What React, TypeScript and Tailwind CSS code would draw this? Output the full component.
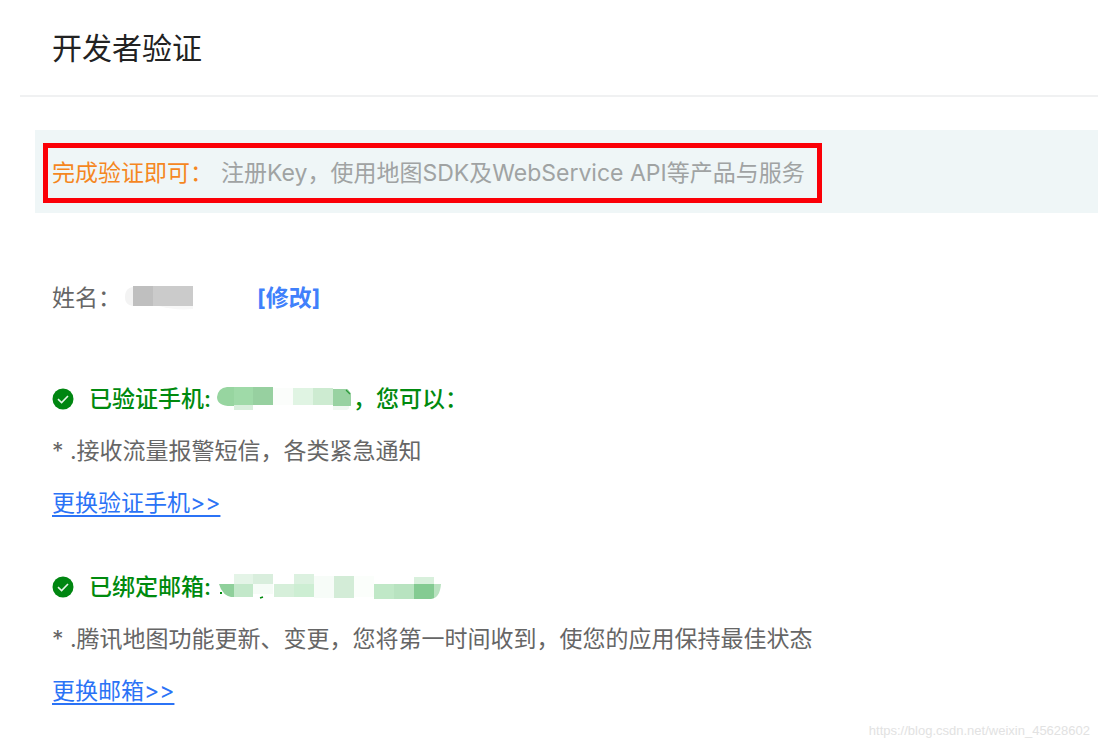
import type { ReactNode } from 'react'
import { clsx } from 'clsx'

type Block = [x: number, y: number, width: number, height: number, fill: string]

// redacted values are drawn as a strip of flat blocks
const nameBlocks: Block[] = [
    [8, 1, 20, 20, '#bfbfbf'],
    [28, 1, 40, 20, '#cbcbcb'],
]

const phoneBlocks: Block[] = [
    [0, 0, 20, 20, '#97d5a0'],
    [17, 0, 20, 18, '#9fdaa8'],
    [36, 0, 20, 18, '#97d0a0'],
    [17, 18, 19, 5, '#d8efdc'],
    [56, 0, 20, 18, '#fbfdfb'],
    [76, 1, 20, 17, '#e0f4e3'],
    [96, 1, 20, 17, '#cdebd1'],
    [116, 2, 18, 17, '#98d2a1'],
    [116, 19, 16, 4, '#f0f8f1'],
]

const mailBlocks: Block[] = [
    [0, 10, 15, 13, '#8fd09b'],
    [15, 0, 20, 10, '#e4f4e7'],
    [15, 10, 19, 13, '#c3e8ca'],
    [34, 0, 20, 10, '#d9eedd'],
    [34, 10, 20, 10, '#f6fcf7'],
    [55, 10, 20, 13, '#d6efda'],
    [75, 0, 20, 10, '#dcf1e0'],
    [75, 10, 20, 13, '#cdeed3'],
    [95, 2, 20, 22, '#f7fcf8'],
    [115, 2, 20, 22, '#d3ecd7'],
    [135, 2, 20, 21, '#fbfefb'],
    [155, 10, 20, 15, '#c0e8c7'],
    [175, 10, 20, 15, '#b8e3c0'],
    [195, 3, 20, 7, '#d8f0dc'],
    [195, 10, 20, 15, '#84cb92'],
    [215, 10, 7, 15, '#b9e2c0'],
]

function NameMask() {
    return (
        <svg width="70" height="26" viewBox="0 0 70 26" aria-hidden="true">
            <path d="M8 2C2 3 0 7 0 12s2 8 8 9z" fill="#f3f3f3" />
            <path d="M34 21h34v3c-12 1-24 0-34-3z" fill="#f7f7f7" />
            {nameBlocks.map(([x, y, width, height, fill]) => (
                <rect key={`${x}-${y}`} x={x} y={y} width={width} height={height} fill={fill} />
            ))}
        </svg>
    )
}

function PhoneMask() {
    return (
        <svg width="136" height="24" viewBox="0 0 136 24" aria-hidden="true">
            <clipPath id="phone-mask">
                <path d="M10 0h46v1h73q6 4 6 11 0 12-10 12H17v-5Q0 20 0 10 1 1 10 0z" />
            </clipPath>
            <g clipPath="url(#phone-mask)">
                {phoneBlocks.map(([x, y, width, height, fill]) => (
                    <rect key={`${x}-${y}`} x={x} y={y} width={width} height={height} fill={fill} />
                ))}
            </g>
            <path d="M129 3l4 4" stroke="#2c9a3a" strokeWidth="1.2" />
        </svg>
    )
}

function MailMask() {
    return (
        <svg width="222" height="26" viewBox="0 0 222 26" aria-hidden="true">
            <clipPath id="mail-mask">
                <path d="M0 10h15V0h190l10 3v7h7q-1 14-10 15H155v-1H15Q3 22 0 10z" />
            </clipPath>
            <g clipPath="url(#mail-mask)">
                {mailBlocks.map(([x, y, width, height, fill]) => (
                    <rect key={`${x}-${y}`} x={x} y={y} width={width} height={height} fill={fill} />
                ))}
            </g>
            <rect x="1" y="18" width="2" height="2" fill="#008a0e" />
            <path d="M41 24l3-1" stroke="#008a0e" strokeWidth="1.5" />
        </svg>
    )
}

function CheckBadge() {
    return (
        <svg width="22" height="22" viewBox="0 0 22 22" className="mr-[15px] shrink-0" aria-hidden="true">
            <circle cx="11" cy="11" r="10.5" fill="#008611" />
            <path d="M6 11.2l3.6 3.4L16 8" fill="none" stroke="#e6f5e8" strokeWidth="1.6" />
        </svg>
    )
}

function Row({ className, children }: { className?: string; children: ReactNode }) {
    return <div className={clsx('flex min-h-[52px] items-center', className)}>{children}</div>
}

function ChangeLink({ children }: { children: ReactNode }) {
    return (
        <a href="#" className="text-[#2b73f6] underline decoration-2 underline-offset-4">
            {children}
        </a>
    )
}

export default function App() {
    return (
        <main className="bg-white pl-5 font-['Inter','Noto_Sans_CJK_SC',sans-serif] text-[23px] leading-8 text-[#666]">
            <header className="border-b-2 border-[#f0f1f2] px-8 pt-[26px] pb-[24px]">
                <h1 className="text-[30px] leading-[45px] text-[#222]">开发者验证</h1>
            </header>

            <div className="mt-[33px] ml-[15px] bg-[#eff6f7] pt-[13px] pb-[10px] pl-2">
                <p className="w-fit border-5 border-[#fb0007] py-[9px] pr-3 pl-1 text-[#a0a3a3]">
                    <span className="mr-2 text-[#f5871f]">完成验证即可：</span>
                    注册Key，使用地图SDK及WebService API等产品与服务
                </p>
            </div>

            <div className="px-8 pt-[59px]">
                <Row>
                    <span>姓名：</span>
                    <span className="ml-1 mr-[62px]"><NameMask /></span>
                    <button type="button" className="font-bold text-[#4080fb]">[修改]</button>
                </Row>

                <section className="mt-[49px]">
                    <Row className="font-medium text-[#008a0e]">
                        <CheckBadge />
                        <span>已验证手机:</span>
                        <span className="ml-1.5"><PhoneMask /></span>
                        <span>，您可以：</span>
                    </Row>
                    <Row>* .接收流量报警短信，各类紧急通知</Row>
                    <Row><ChangeLink>更换验证手机&gt;&gt;</ChangeLink></Row>
                </section>

                <section className="mt-8">
                    <Row className="font-medium text-[#008a0e]">
                        <CheckBadge />
                        <span>已绑定邮箱:</span>
                        <span className="ml-2"><MailMask /></span>
                    </Row>
                    <Row>* .腾讯地图功能更新、变更，您将第一时间收到，使您的应用保持最佳状态</Row>
                    <Row><ChangeLink>更换邮箱&gt;&gt;</ChangeLink></Row>
                </section>
            </div>

            <footer className="pt-1 pr-2 text-right font-['Liberation_Sans',sans-serif] text-[13px] leading-5 text-[#e2e2e2]">
                https://blog.csdn.net/weixin_45628602
            </footer>
        </main>
    )
}
